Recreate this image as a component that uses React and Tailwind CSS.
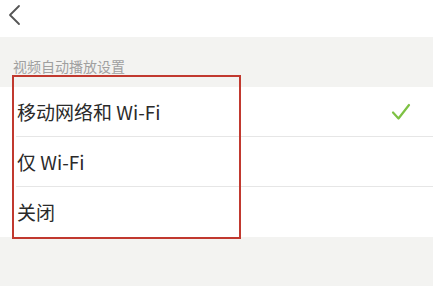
const options = [
  { id: "all", label: "移动网络和 Wi-Fi", checked: true },
  { id: "wifi", label: "仅 Wi-Fi", checked: false },
  { id: "off", label: "关闭", checked: false },
];

function CheckMark() {
  return (
    <svg width="20" height="18" viewBox="0 0 20 18" fill="none">
      <path
        d="M2 9.5l5.5 6L18 2"
        stroke="#7dc143"
        strokeWidth="2.2"
        strokeLinecap="round"
        strokeLinejoin="round"
      />
    </svg>
  );
}

function BackArrow() {
  return (
    <svg width="14" height="22" viewBox="0 0 14 22" fill="none">
      <path
        d="M11 2L2 11l9 9"
        stroke="#555"
        strokeWidth="1.8"
        strokeLinecap="round"
        strokeLinejoin="round"
      />
    </svg>
  );
}

export default function App() {
  return (
    <div
      className="relative w-[433px] h-[286px] overflow-hidden bg-[#f3f3f1]"
      style={{ fontFamily: '"Noto Sans CJK SC", "Noto Sans", sans-serif' }}
    >
      {/* top bar */}
      <header className="flex items-start h-[37px] bg-white pl-[8px] pt-[4px]">
        <BackArrow />
      </header>

      {/* section label */}
      <div className="pt-[19px] pl-[13px] h-[50px] text-[14px] leading-[20px] text-[#a0a0a0]">
        视频自动播放设置
      </div>

      {/* options */}
      <ul className="bg-white">
        {options.map((opt, i) => (
          <li key={opt.id} className="pl-[16px]">
            <div
              className={
                "flex items-center h-[50px] pr-[22px] " +
                (i < options.length - 1 ? "border-b border-[#e6e6e6]" : "")
              }
            >
              <span className="flex-1 pl-[1px] text-[19px] leading-[24px] text-[#2a2a2a]">
                {opt.label}
              </span>
              {opt.checked && <CheckMark />}
            </div>
          </li>
        ))}
      </ul>

      {/* red highlight box */}
      <div className="absolute left-[12px] top-[75px] w-[229px] h-[164px] border-2 border-[#c1392f]" />
    </div>
  );
}
